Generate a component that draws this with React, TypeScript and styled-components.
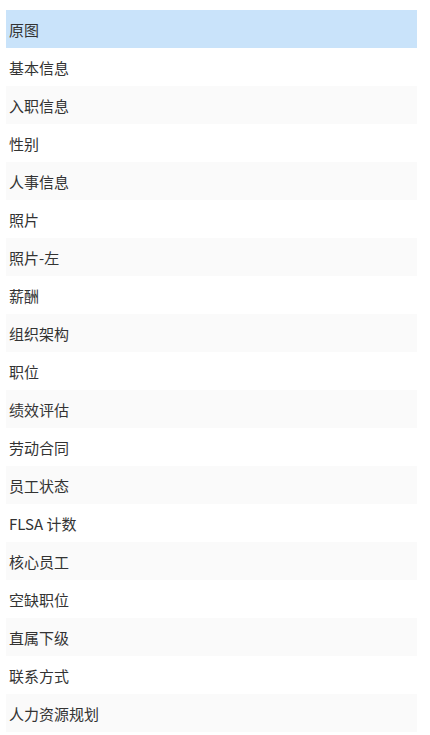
import React from "react";
import styled, { createGlobalStyle } from "styled-components";

const Global = createGlobalStyle`
  html, body { margin: 0; padding: 0; background: #fff; }
  body { font-family: "Noto Sans CJK SC", "Noto Sans", sans-serif; }
`;

const List = styled.ul`
  list-style: none;
  margin: 0;
  padding: 10px 0 0 6px;
  width: 411px;
  display: flex;
  flex-direction: column;
`;

const Row = styled.li<{ $active?: boolean; $odd?: boolean }>`
  height: 38px;
  display: flex;
  align-items: center;
  padding-left: 3px;
  font-size: 15px;
  color: #333;
  background: ${(p) => (p.$active ? "#c9e3fa" : p.$odd ? "#fafafa" : "#ffffff")};
`;

const items = [
  "原图",
  "基本信息",
  "入职信息",
  "性别",
  "人事信息",
  "照片",
  "照片-左",
  "薪酬",
  "组织架构",
  "职位",
  "绩效评估",
  "劳动合同",
  "员工状态",
  "FLSA 计数",
  "核心员工",
  "空缺职位",
  "直属下级",
  "联系方式",
  "人力资源规划",
];

export default function App() {
  return (
    <>
      <Global />
      <List>
        {items.map((t, i) => (
          <Row key={t} $active={i === 0} $odd={i % 2 === 0}>
            {t}
          </Row>
        ))}
      </List>
    </>
  );
}
